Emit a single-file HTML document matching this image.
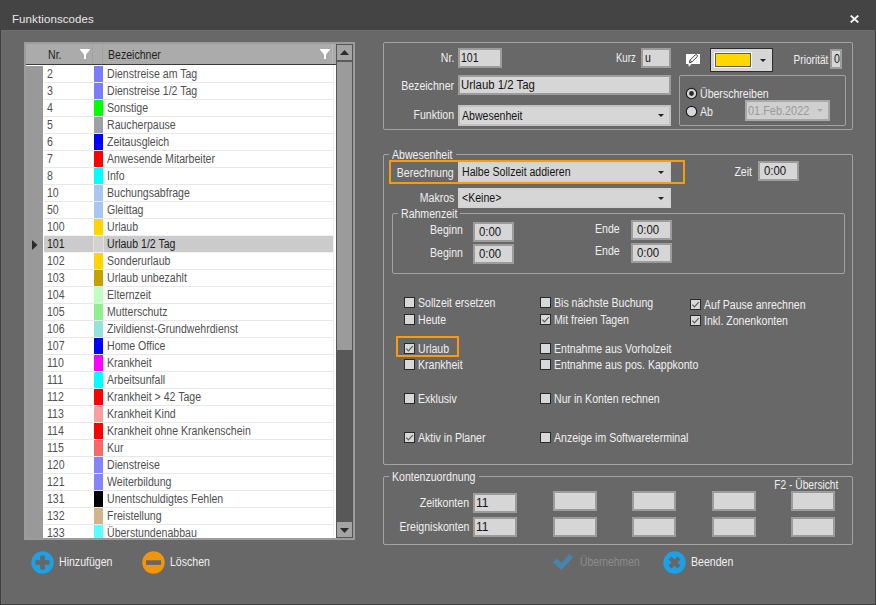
<!DOCTYPE html><html><head><meta charset="utf-8"><style>
html,body{margin:0;padding:0;}
body{width:876px;height:605px;overflow:hidden;background:#444;position:relative;font-family:"Liberation Sans",sans-serif;font-size:12px;}
.a{position:absolute;}
.t{position:absolute;white-space:nowrap;line-height:13px;}
</style></head><body>
<div class="a" style="left:0px;top:0px;width:876px;height:30px;background:#444444;"></div>
<div class="t" style="left:12px;top:13px;color:#e8e8e8;transform-origin:0 0;font-size:11.5px;letter-spacing:0.1px;">Funktionscodes</div>
<svg class="a" style="left:850px;top:15px" width="9" height="8" viewBox="0 0 9 8"><path d="M0.7 0.6 L8.3 7.4 M8.3 0.6 L0.7 7.4" stroke="#f4f4f4" stroke-width="1.9"/></svg>
<div class="a" style="left:0px;top:30px;width:876px;height:575px;background:#686868;border:1px solid #3e3e3e;box-sizing:border-box;border-top:none;"></div>
<div class="a" style="left:1px;top:30px;width:874px;height:1px;background:#6d6d6d;"></div>
<div class="a" style="left:1px;top:30px;width:1px;height:574px;background:#6d6d6d;"></div>
<div class="a" style="left:24px;top:42px;width:331px;height:498px;background:#9c9c9c;"></div>
<div class="a" style="left:26px;top:44px;width:310px;height:20px;background:#ababab;"></div>
<div class="a" style="left:26px;top:64px;width:310px;height:1px;background:#3a3a3a;"></div>
<div class="a" style="left:26px;top:65px;width:310px;height:473px;background:#ffffff;"></div>
<div class="a" style="left:26px;top:66px;width:17px;height:472px;background:#999999;"></div>
<div class="a" style="left:92px;top:44px;width:1px;height:20px;background:#a2a2a2;"></div>
<div class="a" style="left:102px;top:44px;width:1px;height:20px;background:#a2a2a2;"></div>
<div class="a" style="left:332px;top:44px;width:1px;height:20px;background:#b8b8b8;"></div>
<div class="t" style="left:48px;top:49px;color:#1e1e1e;transform-origin:0 0;transform:scaleX(0.88);">Nr.</div>
<div class="t" style="left:108px;top:49px;color:#1e1e1e;transform-origin:0 0;transform:scaleX(0.88);">Bezeichner</div>
<svg class="a" style="left:80px;top:49px" width="10" height="10" viewBox="0 0 10 10"><path d="M0 0 H10 V0.8 L6 5.6 V10 H4 V5.6 L0 0.8 Z" fill="#ffffff"/></svg>
<svg class="a" style="left:320px;top:49px" width="10" height="10" viewBox="0 0 10 10"><path d="M0 0 H10 V0.8 L6 5.6 V10 H4 V5.6 L0 0.8 Z" fill="#ffffff"/></svg>
<div class="a" style="left:26px;top:65px;width:310px;height:473px;overflow:hidden;">
<div class="a" style="left:68px;top:1px;width:9px;height:16px;background:#7b7bff;"></div>
<div class="t" style="left:21px;top:3px;color:#505050;transform-origin:0 0;transform:scaleX(0.88);">2</div>
<div class="t" style="left:81px;top:3px;color:#505050;transform-origin:0 0;transform:scaleX(0.88);">Dienstreise am Tag</div>
<div class="a" style="left:18px;top:17px;width:289px;height:1px;background:#e8e8e8;"></div>
<div class="a" style="left:68px;top:18px;width:9px;height:16px;background:#7b7bff;"></div>
<div class="t" style="left:21px;top:20px;color:#505050;transform-origin:0 0;transform:scaleX(0.88);">3</div>
<div class="t" style="left:81px;top:20px;color:#505050;transform-origin:0 0;transform:scaleX(0.88);">Dienstreise 1/2 Tag</div>
<div class="a" style="left:18px;top:34px;width:289px;height:1px;background:#e8e8e8;"></div>
<div class="a" style="left:68px;top:35px;width:9px;height:16px;background:#00ff00;"></div>
<div class="t" style="left:21px;top:37px;color:#505050;transform-origin:0 0;transform:scaleX(0.88);">4</div>
<div class="t" style="left:81px;top:37px;color:#505050;transform-origin:0 0;transform:scaleX(0.88);">Sonstige</div>
<div class="a" style="left:18px;top:51px;width:289px;height:1px;background:#e8e8e8;"></div>
<div class="a" style="left:68px;top:52px;width:9px;height:16px;background:#9f9fa6;"></div>
<div class="t" style="left:21px;top:54px;color:#505050;transform-origin:0 0;transform:scaleX(0.88);">5</div>
<div class="t" style="left:81px;top:54px;color:#505050;transform-origin:0 0;transform:scaleX(0.88);">Raucherpause</div>
<div class="a" style="left:18px;top:68px;width:289px;height:1px;background:#e8e8e8;"></div>
<div class="a" style="left:68px;top:69px;width:9px;height:16px;background:#0000ff;"></div>
<div class="t" style="left:21px;top:71px;color:#505050;transform-origin:0 0;transform:scaleX(0.88);">6</div>
<div class="t" style="left:81px;top:71px;color:#505050;transform-origin:0 0;transform:scaleX(0.88);">Zeitausgleich</div>
<div class="a" style="left:18px;top:85px;width:289px;height:1px;background:#e8e8e8;"></div>
<div class="a" style="left:68px;top:86px;width:9px;height:16px;background:#ff0000;"></div>
<div class="t" style="left:21px;top:88px;color:#505050;transform-origin:0 0;transform:scaleX(0.88);">7</div>
<div class="t" style="left:81px;top:88px;color:#505050;transform-origin:0 0;transform:scaleX(0.88);">Anwesende Mitarbeiter</div>
<div class="a" style="left:18px;top:102px;width:289px;height:1px;background:#e8e8e8;"></div>
<div class="a" style="left:68px;top:103px;width:9px;height:16px;background:#00ffff;"></div>
<div class="t" style="left:21px;top:105px;color:#505050;transform-origin:0 0;transform:scaleX(0.88);">8</div>
<div class="t" style="left:81px;top:105px;color:#505050;transform-origin:0 0;transform:scaleX(0.88);">Info</div>
<div class="a" style="left:18px;top:119px;width:289px;height:1px;background:#e8e8e8;"></div>
<div class="a" style="left:68px;top:120px;width:9px;height:16px;background:#a6c8f0;"></div>
<div class="t" style="left:21px;top:122px;color:#505050;transform-origin:0 0;transform:scaleX(0.88);">10</div>
<div class="t" style="left:81px;top:122px;color:#505050;transform-origin:0 0;transform:scaleX(0.88);">Buchungsabfrage</div>
<div class="a" style="left:18px;top:136px;width:289px;height:1px;background:#e8e8e8;"></div>
<div class="a" style="left:68px;top:137px;width:9px;height:16px;background:#a6c8f0;"></div>
<div class="t" style="left:21px;top:139px;color:#505050;transform-origin:0 0;transform:scaleX(0.88);">50</div>
<div class="t" style="left:81px;top:139px;color:#505050;transform-origin:0 0;transform:scaleX(0.88);">Gleittag</div>
<div class="a" style="left:18px;top:153px;width:289px;height:1px;background:#e8e8e8;"></div>
<div class="a" style="left:68px;top:154px;width:9px;height:16px;background:#ffd500;"></div>
<div class="t" style="left:21px;top:156px;color:#505050;transform-origin:0 0;transform:scaleX(0.88);">100</div>
<div class="t" style="left:81px;top:156px;color:#505050;transform-origin:0 0;transform:scaleX(0.88);">Urlaub</div>
<div class="a" style="left:18px;top:170px;width:289px;height:1px;background:#f2f2f6;"></div>
<div class="a" style="left:18px;top:171px;width:289px;height:16px;background:#cbcbcb;"></div>
<div class="a" style="left:67px;top:171px;width:1px;height:16px;background:#e2e2e2;"></div>
<div class="a" style="left:77px;top:171px;width:1px;height:16px;background:#e2e2e2;"></div>
<div class="a" style="left:68px;top:171px;width:9px;height:16px;background:#d2d2d2;"></div>
<svg class="a" style="left:6px;top:175px" width="6" height="10" viewBox="0 0 6 10"><path d="M0 0 L5.5 5 L0 10 Z" fill="#2a2a2a"/></svg>
<div class="t" style="left:21px;top:173px;color:#1c1c1c;transform-origin:0 0;transform:scaleX(0.88);">101</div>
<div class="t" style="left:81px;top:173px;color:#1c1c1c;transform-origin:0 0;transform:scaleX(0.88);">Urlaub 1/2 Tag</div>
<div class="a" style="left:18px;top:187px;width:289px;height:1px;background:#f2f2f6;"></div>
<div class="a" style="left:68px;top:188px;width:9px;height:16px;background:#ffd500;"></div>
<div class="t" style="left:21px;top:190px;color:#505050;transform-origin:0 0;transform:scaleX(0.88);">102</div>
<div class="t" style="left:81px;top:190px;color:#505050;transform-origin:0 0;transform:scaleX(0.88);">Sonderurlaub</div>
<div class="a" style="left:18px;top:204px;width:289px;height:1px;background:#e8e8e8;"></div>
<div class="a" style="left:68px;top:205px;width:9px;height:16px;background:#c4a000;"></div>
<div class="t" style="left:21px;top:207px;color:#505050;transform-origin:0 0;transform:scaleX(0.88);">103</div>
<div class="t" style="left:81px;top:207px;color:#505050;transform-origin:0 0;transform:scaleX(0.88);">Urlaub unbezahlt</div>
<div class="a" style="left:18px;top:221px;width:289px;height:1px;background:#e8e8e8;"></div>
<div class="a" style="left:68px;top:222px;width:9px;height:16px;background:#c0ffc0;"></div>
<div class="t" style="left:21px;top:224px;color:#505050;transform-origin:0 0;transform:scaleX(0.88);">104</div>
<div class="t" style="left:81px;top:224px;color:#505050;transform-origin:0 0;transform:scaleX(0.88);">Elternzeit</div>
<div class="a" style="left:18px;top:238px;width:289px;height:1px;background:#e8e8e8;"></div>
<div class="a" style="left:68px;top:239px;width:9px;height:16px;background:#90ee90;"></div>
<div class="t" style="left:21px;top:241px;color:#505050;transform-origin:0 0;transform:scaleX(0.88);">105</div>
<div class="t" style="left:81px;top:241px;color:#505050;transform-origin:0 0;transform:scaleX(0.88);">Mutterschutz</div>
<div class="a" style="left:18px;top:255px;width:289px;height:1px;background:#e8e8e8;"></div>
<div class="a" style="left:68px;top:256px;width:9px;height:16px;background:#94e4dc;"></div>
<div class="t" style="left:21px;top:258px;color:#505050;transform-origin:0 0;transform:scaleX(0.88);">106</div>
<div class="t" style="left:81px;top:258px;color:#505050;transform-origin:0 0;transform:scaleX(0.88);">Zivildienst-Grundwehrdienst</div>
<div class="a" style="left:18px;top:272px;width:289px;height:1px;background:#e8e8e8;"></div>
<div class="a" style="left:68px;top:273px;width:9px;height:16px;background:#0000ff;"></div>
<div class="t" style="left:21px;top:275px;color:#505050;transform-origin:0 0;transform:scaleX(0.88);">107</div>
<div class="t" style="left:81px;top:275px;color:#505050;transform-origin:0 0;transform:scaleX(0.88);">Home Office</div>
<div class="a" style="left:18px;top:289px;width:289px;height:1px;background:#e8e8e8;"></div>
<div class="a" style="left:68px;top:290px;width:9px;height:16px;background:#ff00ff;"></div>
<div class="t" style="left:21px;top:292px;color:#505050;transform-origin:0 0;transform:scaleX(0.88);">110</div>
<div class="t" style="left:81px;top:292px;color:#505050;transform-origin:0 0;transform:scaleX(0.88);">Krankheit</div>
<div class="a" style="left:18px;top:306px;width:289px;height:1px;background:#e8e8e8;"></div>
<div class="a" style="left:68px;top:307px;width:9px;height:16px;background:#00ffff;"></div>
<div class="t" style="left:21px;top:309px;color:#505050;transform-origin:0 0;transform:scaleX(0.88);">111</div>
<div class="t" style="left:81px;top:309px;color:#505050;transform-origin:0 0;transform:scaleX(0.88);">Arbeitsunfall</div>
<div class="a" style="left:18px;top:323px;width:289px;height:1px;background:#e8e8e8;"></div>
<div class="a" style="left:68px;top:324px;width:9px;height:16px;background:#ff0000;"></div>
<div class="t" style="left:21px;top:326px;color:#505050;transform-origin:0 0;transform:scaleX(0.88);">112</div>
<div class="t" style="left:81px;top:326px;color:#505050;transform-origin:0 0;transform:scaleX(0.88);">Krankheit &gt; 42 Tage</div>
<div class="a" style="left:18px;top:340px;width:289px;height:1px;background:#e8e8e8;"></div>
<div class="a" style="left:68px;top:341px;width:9px;height:16px;background:#f8a0a0;"></div>
<div class="t" style="left:21px;top:343px;color:#505050;transform-origin:0 0;transform:scaleX(0.88);">113</div>
<div class="t" style="left:81px;top:343px;color:#505050;transform-origin:0 0;transform:scaleX(0.88);">Krankheit Kind</div>
<div class="a" style="left:18px;top:357px;width:289px;height:1px;background:#e8e8e8;"></div>
<div class="a" style="left:68px;top:358px;width:9px;height:16px;background:#ff0000;"></div>
<div class="t" style="left:21px;top:360px;color:#505050;transform-origin:0 0;transform:scaleX(0.88);">114</div>
<div class="t" style="left:81px;top:360px;color:#505050;transform-origin:0 0;transform:scaleX(0.88);">Krankheit ohne Krankenschein</div>
<div class="a" style="left:18px;top:374px;width:289px;height:1px;background:#e8e8e8;"></div>
<div class="a" style="left:68px;top:375px;width:9px;height:16px;background:#f86868;"></div>
<div class="t" style="left:21px;top:377px;color:#505050;transform-origin:0 0;transform:scaleX(0.88);">115</div>
<div class="t" style="left:81px;top:377px;color:#505050;transform-origin:0 0;transform:scaleX(0.88);">Kur</div>
<div class="a" style="left:18px;top:391px;width:289px;height:1px;background:#e8e8e8;"></div>
<div class="a" style="left:68px;top:392px;width:9px;height:16px;background:#8484ff;"></div>
<div class="t" style="left:21px;top:394px;color:#505050;transform-origin:0 0;transform:scaleX(0.88);">120</div>
<div class="t" style="left:81px;top:394px;color:#505050;transform-origin:0 0;transform:scaleX(0.88);">Dienstreise</div>
<div class="a" style="left:18px;top:408px;width:289px;height:1px;background:#e8e8e8;"></div>
<div class="a" style="left:68px;top:409px;width:9px;height:16px;background:#8484ff;"></div>
<div class="t" style="left:21px;top:411px;color:#505050;transform-origin:0 0;transform:scaleX(0.88);">121</div>
<div class="t" style="left:81px;top:411px;color:#505050;transform-origin:0 0;transform:scaleX(0.88);">Weiterbildung</div>
<div class="a" style="left:18px;top:425px;width:289px;height:1px;background:#e8e8e8;"></div>
<div class="a" style="left:68px;top:426px;width:9px;height:16px;background:#000000;"></div>
<div class="t" style="left:21px;top:428px;color:#505050;transform-origin:0 0;transform:scaleX(0.88);">131</div>
<div class="t" style="left:81px;top:428px;color:#505050;transform-origin:0 0;transform:scaleX(0.88);">Unentschuldigtes Fehlen</div>
<div class="a" style="left:18px;top:442px;width:289px;height:1px;background:#e8e8e8;"></div>
<div class="a" style="left:68px;top:443px;width:9px;height:16px;background:#d2b48c;"></div>
<div class="t" style="left:21px;top:445px;color:#505050;transform-origin:0 0;transform:scaleX(0.88);">132</div>
<div class="t" style="left:81px;top:445px;color:#505050;transform-origin:0 0;transform:scaleX(0.88);">Freistellung</div>
<div class="a" style="left:18px;top:459px;width:289px;height:1px;background:#e8e8e8;"></div>
<div class="a" style="left:68px;top:460px;width:9px;height:16px;background:#5cffff;"></div>
<div class="t" style="left:21px;top:462px;color:#505050;transform-origin:0 0;transform:scaleX(0.88);">133</div>
<div class="t" style="left:81px;top:462px;color:#505050;transform-origin:0 0;transform:scaleX(0.88);">Überstundenabbau</div>
</div>
<div class="a" style="left:333px;top:65px;width:1px;height:473px;background:#f0f0f0;"></div>
<div class="a" style="left:336px;top:44px;width:17px;height:494px;background:#585858;border:1px solid #555555;box-sizing:border-box;"></div>
<div class="a" style="left:337px;top:45px;width:15px;height:15px;background:#a3a3a3;"></div>
<div class="a" style="left:337px;top:60px;width:15px;height:2px;background:#5a5a5a;"></div>
<div class="a" style="left:337px;top:62px;width:15px;height:288px;background:#9b9b9b;"></div>
<div class="a" style="left:337px;top:522px;width:15px;height:15px;background:#a3a3a3;"></div>
<svg class="a" style="left:340px;top:50px" width="9" height="5" viewBox="0 0 9 5"><path d="M0 5 L4.5 0 L9 5 Z" fill="#2a2a2a"/></svg>
<svg class="a" style="left:340px;top:528px" width="9" height="5" viewBox="0 0 9 5"><path d="M0 0 L4.5 5 L9 0 Z" fill="#2a2a2a"/></svg>
<div class="a" style="left:383px;top:42px;width:470px;height:88px;border:1px solid #a3a3a3;box-sizing:border-box;border-radius:2px;"></div>
<div class="t" style="right:422px;top:52px;color:#f0f0f0;transform-origin:100% 0;transform:scaleX(0.88);">Nr.</div>
<div class="a" style="left:458px;top:48px;width:44px;height:20px;background:#d6d6d6;border:2px solid #9c9c9c;box-sizing:border-box;"></div>
<div class="t" style="left:461px;top:52px;color:#141414;transform-origin:0 0;transform:scaleX(0.88);">101</div>
<div class="t" style="right:422px;top:80px;color:#f0f0f0;transform-origin:100% 0;transform:scaleX(0.88);">Bezeichner</div>
<div class="a" style="left:458px;top:75px;width:213px;height:20px;background:#d6d6d6;border:2px solid #9c9c9c;box-sizing:border-box;"></div>
<div class="t" style="left:461px;top:79px;color:#141414;transform-origin:0 0;transform:scaleX(0.95);">Urlaub 1/2 Tag</div>
<div class="t" style="right:422px;top:109px;color:#f0f0f0;transform-origin:100% 0;transform:scaleX(0.88);">Funktion</div>
<div class="a" style="left:458px;top:105px;width:213px;height:21px;background:#d6d6d6;border:2px solid #c2c2c2;box-sizing:border-box;"></div>
<div class="t" style="left:462px;top:110px;color:#141414;transform-origin:0 0;transform:scaleX(0.88);">Abwesenheit</div>
<div class="a" style="left:658px;top:114px;width:0;height:0;border-left:3px solid transparent;border-right:3px solid transparent;border-top:3px solid #222;"></div>
<div class="t" style="right:240px;top:52px;color:#f0f0f0;transform-origin:100% 0;transform:scaleX(0.8);">Kurz</div>
<div class="a" style="left:641px;top:48px;width:30px;height:20px;background:#d6d6d6;border:2px solid #9c9c9c;box-sizing:border-box;"></div>
<div class="t" style="left:645px;top:52px;color:#141414;transform-origin:0 0;transform:scaleX(0.88);">u</div>
<svg class="a" style="left:686px;top:54px" width="14" height="13" viewBox="0 0 14 13"><path d="M0 0 H14 V10 H5.5 L3 12.8 L2.2 10 H0 Z" fill="#ffffff"/><path d="M3.3 8.7 L3.98 6.18 L9.28 0.88 Q10.3 0.2 11.12 1.1 Q11.8 2 11.12 2.72 L5.82 8.02 Z M3.98 6.18 L5.82 8.02" fill="none" stroke="#3a3a3a" stroke-width="0.95"/></svg>
<div class="a" style="left:710px;top:48px;width:63px;height:24px;background:#d6d6d6;border:1px solid #2c2c2c;box-sizing:border-box;"></div>
<div class="a" style="left:714px;top:52px;width:38px;height:16px;background:#ffffff;"></div>
<div class="a" style="left:715px;top:53px;width:36px;height:14px;background:#ffd800;border:1px solid #5c5c66;box-sizing:border-box;"></div>
<div class="a" style="left:760px;top:59px;width:0;height:0;border-left:3px solid transparent;border-right:3px solid transparent;border-top:3px solid #222;"></div>
<div class="t" style="right:48px;top:54px;color:#f0f0f0;transform-origin:100% 0;transform:scaleX(0.84);">Priorität</div>
<div class="a" style="left:830px;top:49px;width:12px;height:20px;background:#d6d6d6;border:2px solid #9c9c9c;box-sizing:border-box;"></div>
<div class="t" style="left:834px;top:53px;color:#141414;transform-origin:0 0;transform:scaleX(0.88);">0</div>
<div class="a" style="left:679px;top:75px;width:167px;height:51px;border:1px solid #a3a3a3;box-sizing:border-box;border-radius:2px;"></div>
<svg class="a" style="left:685px;top:87px" width="13" height="13" viewBox="0 0 13 13"><circle cx="6.5" cy="6.5" r="5.2" fill="#d8d8d8" stroke="#1e1e1e" stroke-width="1.15"/><circle cx="6.5" cy="6.5" r="2.4" fill="#2a2a2a"/></svg>
<div class="t" style="left:700px;top:88px;color:#f0f0f0;transform-origin:0 0;transform:scaleX(0.88);">Überschreiben</div>
<svg class="a" style="left:685px;top:105px" width="13" height="13" viewBox="0 0 13 13"><circle cx="6.5" cy="6.5" r="5.2" fill="#d8d8d8" stroke="#1e1e1e" stroke-width="1.15"/></svg>
<div class="t" style="left:700px;top:106px;color:#f0f0f0;transform-origin:0 0;transform:scaleX(0.88);">Ab</div>
<div class="a" style="left:745px;top:100px;width:85px;height:21px;background:#d0d0d0;border:2px solid #a8a8a8;box-sizing:border-box;"></div>
<div class="t" style="left:748px;top:105px;color:#9a9a9a;transform-origin:0 0;transform:scaleX(0.91);">01.Feb.2022</div>
<div class="a" style="left:817px;top:109px;width:0;height:0;border-left:3px solid transparent;border-right:3px solid transparent;border-top:3px solid #aaaaaa;"></div>
<div class="a" style="left:383px;top:154px;width:470px;height:311px;border:1px solid #a3a3a3;box-sizing:border-box;border-radius:2px;"></div>
<div class="a" style="left:389px;top:153px;width:67px;height:3px;background:#686868;"></div>
<div class="t" style="left:392px;top:149px;color:#f0f0f0;transform-origin:0 0;transform:scaleX(0.88);">Abwesenheit</div>
<div class="a" style="left:389px;top:160px;width:296px;height:24px;border:2px solid #fa9c0a;box-sizing:border-box;"></div>
<div class="t" style="right:422px;top:167px;color:#f0f0f0;transform-origin:100% 0;transform:scaleX(0.88);">Berechnung</div>
<div class="a" style="left:458px;top:162px;width:213px;height:20px;background:#d6d6d6;border:2px solid #d2d2d2;box-sizing:border-box;"></div>
<div class="t" style="left:462px;top:166px;color:#141414;transform-origin:0 0;transform:scaleX(0.88);">Halbe Sollzeit addieren</div>
<div class="a" style="left:658px;top:171px;width:0;height:0;border-left:3px solid transparent;border-right:3px solid transparent;border-top:3px solid #222;"></div>
<div class="t" style="right:422px;top:192px;color:#f0f0f0;transform-origin:100% 0;transform:scaleX(0.88);">Makros</div>
<div class="a" style="left:458px;top:188px;width:213px;height:20px;background:#d6d6d6;border:2px solid #d2d2d2;box-sizing:border-box;"></div>
<div class="t" style="left:462px;top:192px;color:#141414;transform-origin:0 0;transform:scaleX(0.88);">&lt;Keine&gt;</div>
<div class="a" style="left:658px;top:197px;width:0;height:0;border-left:3px solid transparent;border-right:3px solid transparent;border-top:3px solid #222;"></div>
<div class="t" style="right:124px;top:166px;color:#f0f0f0;transform-origin:100% 0;transform:scaleX(0.88);">Zeit</div>
<div class="a" style="left:758px;top:161px;width:41px;height:20px;background:#d6d6d6;border:2px solid #9c9c9c;box-sizing:border-box;"></div>
<div class="t" style="left:764px;top:165px;color:#141414;transform-origin:0 0;transform:scaleX(0.95);">0:00</div>
<div class="a" style="left:392px;top:213px;width:453px;height:61px;border:1px solid #a3a3a3;box-sizing:border-box;border-radius:2px;"></div>
<div class="a" style="left:398px;top:212px;width:62px;height:3px;background:#686868;"></div>
<div class="t" style="left:401px;top:208px;color:#f0f0f0;transform-origin:0 0;transform:scaleX(0.88);">Rahmenzeit</div>
<div class="t" style="left:430px;top:224px;color:#f0f0f0;transform-origin:0 0;transform:scaleX(0.88);">Beginn</div>
<div class="a" style="left:473px;top:222px;width:41px;height:20px;background:#d6d6d6;border:2px solid #9c9c9c;box-sizing:border-box;"></div>
<div class="t" style="left:479px;top:226px;color:#141414;transform-origin:0 0;transform:scaleX(0.95);">0:00</div>
<div class="t" style="left:430px;top:247px;color:#f0f0f0;transform-origin:0 0;transform:scaleX(0.88);">Beginn</div>
<div class="a" style="left:473px;top:244px;width:41px;height:20px;background:#d6d6d6;border:2px solid #9c9c9c;box-sizing:border-box;"></div>
<div class="t" style="left:479px;top:248px;color:#141414;transform-origin:0 0;transform:scaleX(0.95);">0:00</div>
<div class="t" style="left:595px;top:223px;color:#f0f0f0;transform-origin:0 0;transform:scaleX(0.88);">Ende</div>
<div class="a" style="left:631px;top:220px;width:41px;height:20px;background:#d6d6d6;border:2px solid #9c9c9c;box-sizing:border-box;"></div>
<div class="t" style="left:637px;top:224px;color:#141414;transform-origin:0 0;transform:scaleX(0.95);">0:00</div>
<div class="t" style="left:595px;top:245px;color:#f0f0f0;transform-origin:0 0;transform:scaleX(0.88);">Ende</div>
<div class="a" style="left:631px;top:243px;width:41px;height:20px;background:#d6d6d6;border:2px solid #9c9c9c;box-sizing:border-box;"></div>
<div class="t" style="left:637px;top:247px;color:#141414;transform-origin:0 0;transform:scaleX(0.95);">0:00</div>
<div class="a" style="left:404px;top:297px;width:11px;height:11px;background:#d8d8d8;border:1px solid #2a2a2a;box-sizing:border-box;"></div>
<div class="t" style="left:418px;top:297px;color:#f0f0f0;transform-origin:0 0;transform:scaleX(0.88);">Sollzeit ersetzen</div>
<div class="a" style="left:404px;top:314px;width:11px;height:11px;background:#d8d8d8;border:1px solid #2a2a2a;box-sizing:border-box;"></div>
<div class="t" style="left:418px;top:314px;color:#f0f0f0;transform-origin:0 0;transform:scaleX(0.88);">Heute</div>
<div class="a" style="left:396px;top:336px;width:63px;height:21px;border:2px solid #fa9c0a;box-sizing:border-box;"></div>
<div class="a" style="left:404px;top:343px;width:11px;height:11px;background:#d8d8d8;border:1px solid #2a2a2a;box-sizing:border-box;"></div>
<svg class="a" style="left:404px;top:343px" width="11" height="11" viewBox="0 0 11 11"><path d="M2.3 5.6 L4.4 7.8 L8.8 3.2" fill="none" stroke="#5a5a5a" stroke-width="1.2"/></svg>
<div class="t" style="left:418px;top:343px;color:#f0f0f0;transform-origin:0 0;transform:scaleX(0.88);">Urlaub</div>
<div class="a" style="left:404px;top:359px;width:11px;height:11px;background:#d8d8d8;border:1px solid #2a2a2a;box-sizing:border-box;"></div>
<div class="t" style="left:418px;top:359px;color:#f0f0f0;transform-origin:0 0;transform:scaleX(0.88);">Krankheit</div>
<div class="a" style="left:404px;top:393px;width:11px;height:11px;background:#d8d8d8;border:1px solid #2a2a2a;box-sizing:border-box;"></div>
<div class="t" style="left:418px;top:393px;color:#f0f0f0;transform-origin:0 0;transform:scaleX(0.88);">Exklusiv</div>
<div class="a" style="left:404px;top:432px;width:11px;height:11px;background:#d8d8d8;border:1px solid #2a2a2a;box-sizing:border-box;"></div>
<svg class="a" style="left:404px;top:432px" width="11" height="11" viewBox="0 0 11 11"><path d="M2.3 5.6 L4.4 7.8 L8.8 3.2" fill="none" stroke="#5a5a5a" stroke-width="1.2"/></svg>
<div class="t" style="left:418px;top:432px;color:#f0f0f0;transform-origin:0 0;transform:scaleX(0.88);">Aktiv in Planer</div>
<div class="a" style="left:540px;top:297px;width:11px;height:11px;background:#d8d8d8;border:1px solid #2a2a2a;box-sizing:border-box;"></div>
<div class="t" style="left:554px;top:297px;color:#f0f0f0;transform-origin:0 0;transform:scaleX(0.88);">Bis nächste Buchung</div>
<div class="a" style="left:540px;top:314px;width:11px;height:11px;background:#d8d8d8;border:1px solid #2a2a2a;box-sizing:border-box;"></div>
<svg class="a" style="left:540px;top:314px" width="11" height="11" viewBox="0 0 11 11"><path d="M2.3 5.6 L4.4 7.8 L8.8 3.2" fill="none" stroke="#5a5a5a" stroke-width="1.2"/></svg>
<div class="t" style="left:554px;top:314px;color:#f0f0f0;transform-origin:0 0;transform:scaleX(0.88);">Mit freien Tagen</div>
<div class="a" style="left:540px;top:343px;width:11px;height:11px;background:#d8d8d8;border:1px solid #2a2a2a;box-sizing:border-box;"></div>
<div class="t" style="left:554px;top:343px;color:#f0f0f0;transform-origin:0 0;transform:scaleX(0.88);">Entnahme aus Vorholzeit</div>
<div class="a" style="left:540px;top:359px;width:11px;height:11px;background:#d8d8d8;border:1px solid #2a2a2a;box-sizing:border-box;"></div>
<div class="t" style="left:554px;top:359px;color:#f0f0f0;transform-origin:0 0;transform:scaleX(0.88);">Entnahme aus pos. Kappkonto</div>
<div class="a" style="left:540px;top:393px;width:11px;height:11px;background:#d8d8d8;border:1px solid #2a2a2a;box-sizing:border-box;"></div>
<div class="t" style="left:554px;top:393px;color:#f0f0f0;transform-origin:0 0;transform:scaleX(0.88);">Nur in Konten rechnen</div>
<div class="a" style="left:540px;top:432px;width:11px;height:11px;background:#d8d8d8;border:1px solid #2a2a2a;box-sizing:border-box;"></div>
<div class="t" style="left:554px;top:432px;color:#f0f0f0;transform-origin:0 0;transform:scaleX(0.88);">Anzeige im Softwareterminal</div>
<div class="a" style="left:690px;top:299px;width:11px;height:11px;background:#d8d8d8;border:1px solid #2a2a2a;box-sizing:border-box;"></div>
<svg class="a" style="left:690px;top:299px" width="11" height="11" viewBox="0 0 11 11"><path d="M2.3 5.6 L4.4 7.8 L8.8 3.2" fill="none" stroke="#5a5a5a" stroke-width="1.2"/></svg>
<div class="t" style="left:704px;top:299px;color:#f0f0f0;transform-origin:0 0;transform:scaleX(0.88);">Auf Pause anrechnen</div>
<div class="a" style="left:690px;top:315px;width:11px;height:11px;background:#d8d8d8;border:1px solid #2a2a2a;box-sizing:border-box;"></div>
<svg class="a" style="left:690px;top:315px" width="11" height="11" viewBox="0 0 11 11"><path d="M2.3 5.6 L4.4 7.8 L8.8 3.2" fill="none" stroke="#5a5a5a" stroke-width="1.2"/></svg>
<div class="t" style="left:704px;top:315px;color:#f0f0f0;transform-origin:0 0;transform:scaleX(0.88);">Inkl. Zonenkonten</div>
<div class="a" style="left:383px;top:476px;width:470px;height:69px;border:1px solid #a3a3a3;box-sizing:border-box;border-radius:2px;"></div>
<div class="a" style="left:389px;top:475px;width:90px;height:3px;background:#686868;"></div>
<div class="t" style="left:392px;top:471px;color:#f0f0f0;transform-origin:0 0;transform:scaleX(0.88);">Kontenzuordnung</div>
<div class="t" style="right:38px;top:479px;color:#f0f0f0;transform-origin:100% 0;transform:scaleX(0.85);">F2 - Übersicht</div>
<div class="t" style="right:407px;top:497px;color:#f0f0f0;transform-origin:100% 0;transform:scaleX(0.88);">Zeitkonten</div>
<div class="t" style="right:407px;top:521px;color:#f0f0f0;transform-origin:100% 0;transform:scaleX(0.88);">Ereigniskonten</div>
<div class="a" style="left:473px;top:493px;width:44px;height:20px;background:#d6d6d6;border:2px solid #9c9c9c;box-sizing:border-box;"></div>
<div class="t" style="left:476px;top:497px;color:#141414;transform-origin:0 0;">11</div>
<div class="a" style="left:473px;top:517px;width:44px;height:20px;background:#d6d6d6;border:2px solid #9c9c9c;box-sizing:border-box;"></div>
<div class="t" style="left:476px;top:521px;color:#141414;transform-origin:0 0;">11</div>
<div class="a" style="left:553px;top:491px;width:44px;height:20px;background:#d6d6d6;border:2px solid #9c9c9c;box-sizing:border-box;"></div>
<div class="a" style="left:553px;top:517px;width:44px;height:20px;background:#d6d6d6;border:2px solid #9c9c9c;box-sizing:border-box;"></div>
<div class="a" style="left:632px;top:491px;width:44px;height:20px;background:#d6d6d6;border:2px solid #9c9c9c;box-sizing:border-box;"></div>
<div class="a" style="left:632px;top:517px;width:44px;height:20px;background:#d6d6d6;border:2px solid #9c9c9c;box-sizing:border-box;"></div>
<div class="a" style="left:712px;top:491px;width:44px;height:20px;background:#d6d6d6;border:2px solid #9c9c9c;box-sizing:border-box;"></div>
<div class="a" style="left:712px;top:517px;width:44px;height:20px;background:#d6d6d6;border:2px solid #9c9c9c;box-sizing:border-box;"></div>
<div class="a" style="left:791px;top:491px;width:44px;height:20px;background:#d6d6d6;border:2px solid #9c9c9c;box-sizing:border-box;"></div>
<div class="a" style="left:791px;top:517px;width:44px;height:20px;background:#d6d6d6;border:2px solid #9c9c9c;box-sizing:border-box;"></div>
<svg class="a" style="left:31px;top:551px" width="23" height="23" viewBox="0 0 23 23"><circle cx="11.5" cy="11.5" r="11.2" fill="#1f9fe4"/><path d="M9.2 4.5 H13.8 V9.2 H18.5 V13.8 H13.8 V18.5 H9.2 V13.8 H4.5 V9.2 H9.2 Z" fill="#666666"/></svg>
<div class="t" style="left:59px;top:556px;color:#f0f0f0;transform-origin:0 0;transform:scaleX(0.88);">Hinzufügen</div>
<svg class="a" style="left:142px;top:551px" width="23" height="23" viewBox="0 0 23 23"><circle cx="11.5" cy="11.5" r="11.2" fill="#f0960c"/><rect x="4" y="9.3" width="15" height="4.6" fill="#666666"/></svg>
<div class="t" style="left:170px;top:556px;color:#f0f0f0;transform-origin:0 0;transform:scaleX(0.88);">Löschen</div>
<svg class="a" style="left:548px;top:550px" width="28" height="22" viewBox="0 0 28 22"><path d="M5 12.3 L8.5 8.5 L13.3 12.9 L21.6 4 L25 7.3 L13.5 20 Z" fill="#4686ad"/></svg>
<div class="t" style="left:580px;top:556px;color:#8c8c8c;transform-origin:0 0;transform:scaleX(0.86);">Übernehmen</div>
<svg class="a" style="left:663px;top:551px" width="23" height="23" viewBox="0 0 23 23"><circle cx="11.5" cy="11.5" r="11.2" fill="#1f9fe4"/><path d="M7 7 L16 16 M16 7 L7 16" stroke="#666666" stroke-width="4.2"/></svg>
<div class="t" style="left:691px;top:556px;color:#f0f0f0;transform-origin:0 0;transform:scaleX(0.88);">Beenden</div>
</body></html>
